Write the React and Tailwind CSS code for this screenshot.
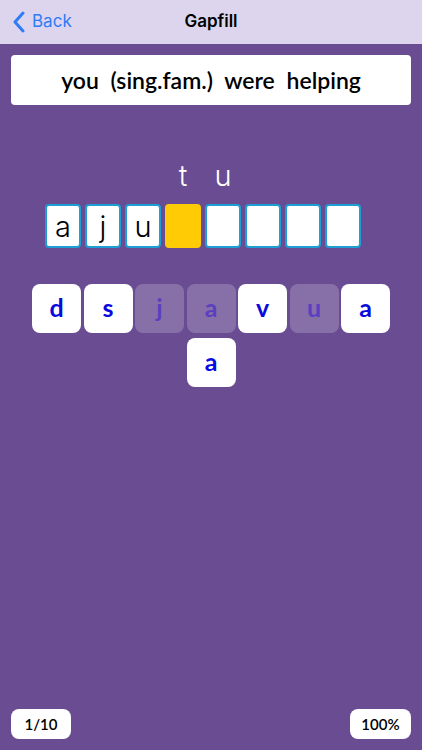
import React from 'react';

const SLOTS = ['a', 'j', 'u', null, '', '', '', ''];
const HINTS = ['', '', '', 't', 'u', '', '', ''];
const TILES = [
  { ch: 'd', used: false },
  { ch: 's', used: false },
  { ch: 'j', used: true },
  { ch: 'a', used: true },
  { ch: 'v', used: false },
  { ch: 'u', used: true },
  { ch: 'a', used: false },
  { ch: 'a', used: false },
];

function Tile({ ch, used }) {
  return (
    <div
      className={
        'w-[49px] h-[49px] rounded-[8px] flex items-center justify-center text-[25px] font-bold leading-none pb-[2px] ' +
        (used ? 'bg-white/20 text-[#5a3fc0]' : 'bg-white text-[#0a0ae0]')
      }
      style={{ fontFamily: 'Lato, "Open Sans", sans-serif' }}
    >
      {ch}
    </div>
  );
}

export default function App() {
  return (
    <div className="w-[422px] h-[750px] bg-[#6a4c93] flex flex-col" style={{ fontFamily: 'Inter, "Liberation Sans", sans-serif' }}>
      {/* nav bar */}
      <div className="h-[44px] bg-[#ddd4ed] flex items-center relative shrink-0">
        <div className="flex items-center pl-[12px] gap-[6px] text-[#2f7cf6]">
          <svg width="14" height="22" viewBox="0 0 14 22" fill="none" stroke="currentColor" strokeWidth="3" strokeLinecap="round" strokeLinejoin="round">
            <path d="M11 2 L3 11 L11 20" />
          </svg>
          <span className="text-[17px]">Back</span>
        </div>
        <div className="absolute inset-x-0 text-center text-[17px] font-semibold text-black pointer-events-none">Gapfill</div>
      </div>

      <div className="px-[11px] pt-[11px]">
        <div
          className="h-[50px] bg-white rounded-[4px] flex items-center justify-center text-[23px] font-semibold text-black [word-spacing:6px]"
          style={{ fontFamily: 'Lato, "Open Sans", sans-serif' }}
        >
          you (sing.fam.) were helping
        </div>
      </div>

      {/* hint letters line up over the gap slots */}
      <div className="flex justify-center gap-[4px] pr-[16px] mt-[56px] h-[34px]">
        {HINTS.map((h, i) => (
          <div key={i} className="w-[36px] flex justify-center text-white text-[29px] font-light leading-none">
            {h}
          </div>
        ))}
      </div>

      <div className="flex justify-center gap-[4px] pr-[16px] mt-[9px]">
        {SLOTS.map((s, i) =>
          s === null ? (
            <div key={i} className="w-[36px] h-[44px] rounded-[4px] bg-[#ffcb05]" />
          ) : (
            <div
              key={i}
              className="w-[36px] h-[44px] rounded-[4px] bg-white border-2 border-[#1d9fd3] flex items-end justify-center text-[29px] font-light text-black leading-none pb-[5px]"
            >
              {s}
            </div>
          )
        )}
      </div>

      <div className="mt-[36px] mx-auto w-[360px] flex flex-wrap justify-center gap-x-[2.5px] gap-y-[5px]">
        {TILES.map((t, i) => (
          <Tile key={i} {...t} />
        ))}
      </div>

      <div className="flex-1" />

      <div className="flex justify-between px-[11px] pb-[11px]" style={{ fontFamily: 'Lato, "Open Sans", sans-serif' }}>
        <div className="w-[60px] h-[30px] bg-white rounded-[8px] flex items-center justify-center text-[15px] font-semibold text-black">1/10</div>
        <div className="w-[61px] h-[30px] bg-white rounded-[8px] flex items-center justify-center text-[15px] font-semibold text-black">100%</div>
      </div>
    </div>
  );
}
